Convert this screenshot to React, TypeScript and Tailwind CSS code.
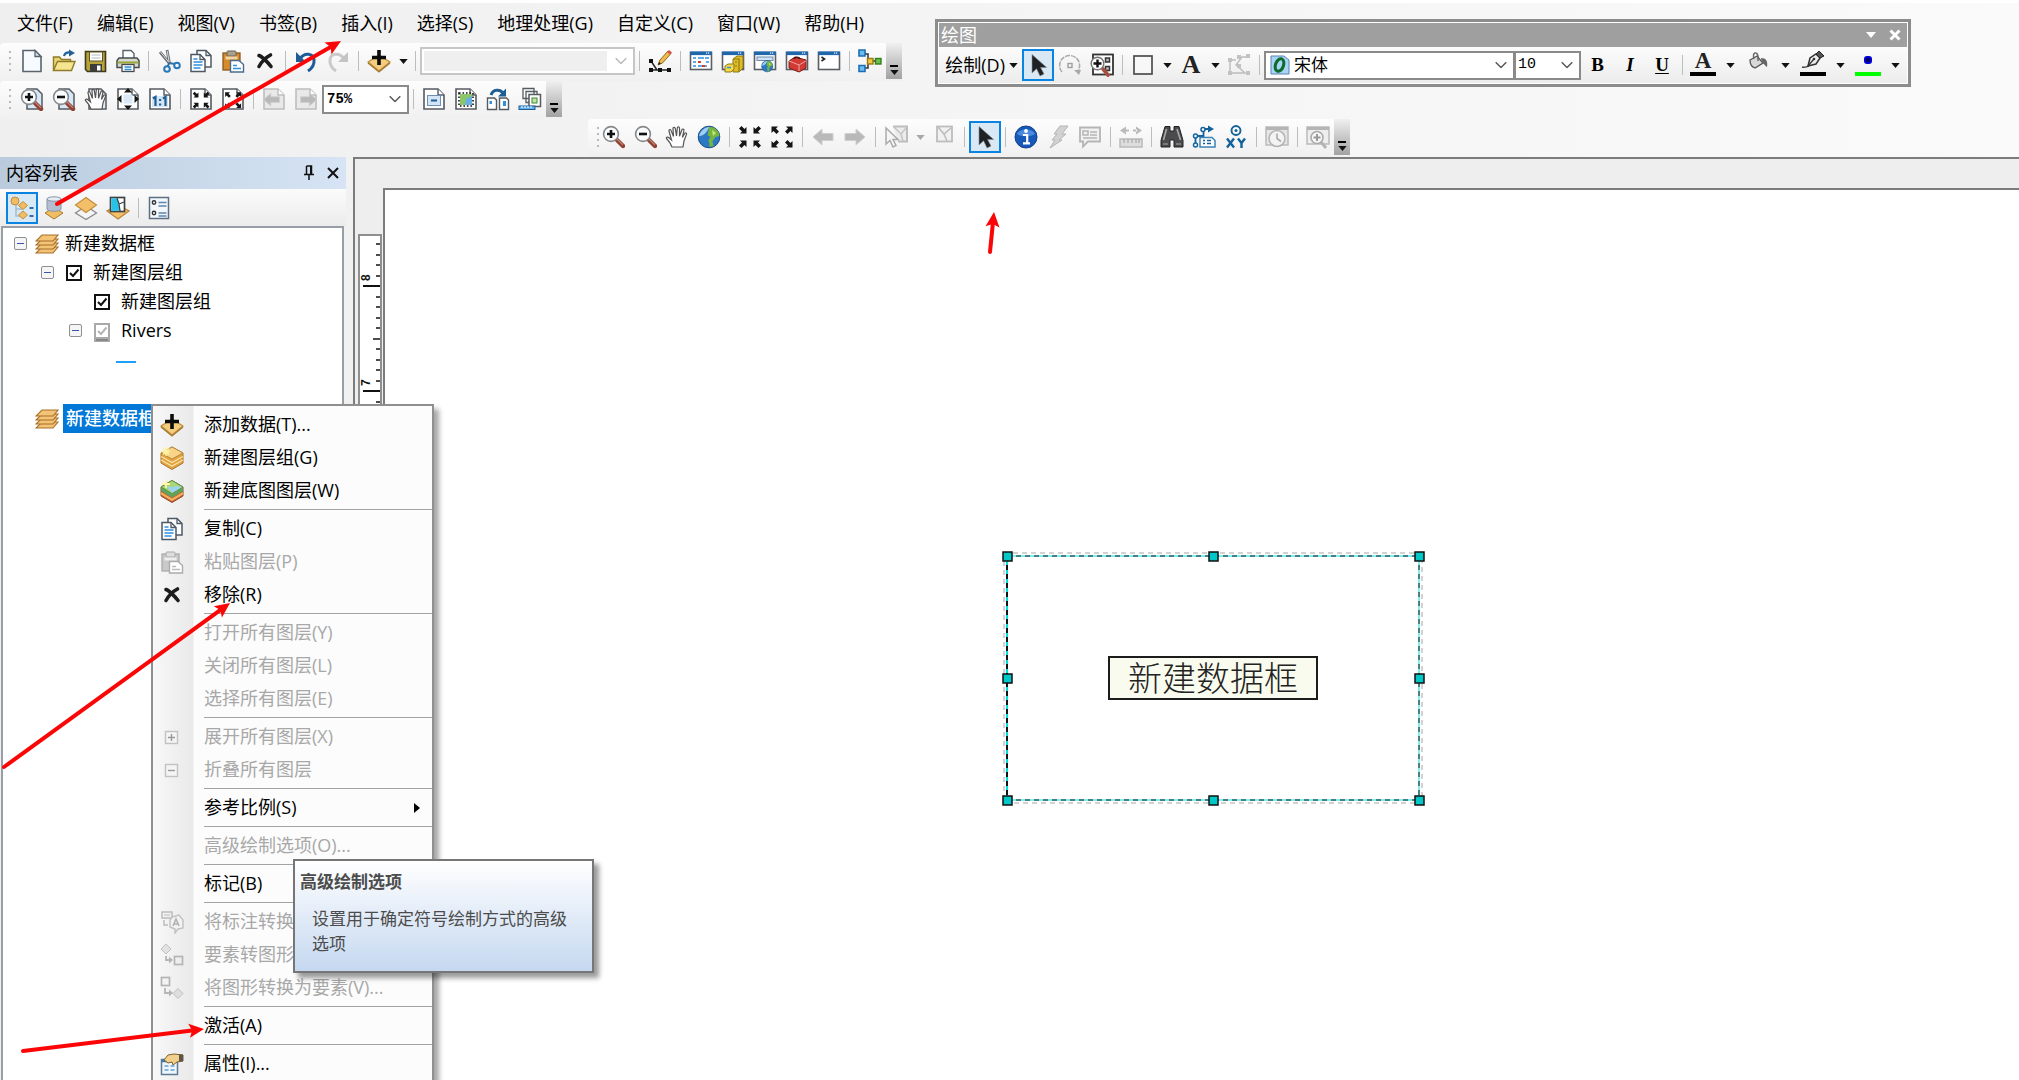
import React from "react";

type Kids = { children?: React.ReactNode };

const Svg = ({ children }: Kids) => (
  <svg viewBox="0 0 24 24" className="size-6 shrink-0" fill="none" aria-hidden="true">
    {children}
  </svg>
);

/* ---------- shared icon parts ---------- */
const Page = ({ dim = false, fold = true }: { dim?: boolean; fold?: boolean }) => (
  <>
    <path
      d={fold ? "M2 2h14l6 6v14H2z" : "M2 2h20v20H2z"}
      fill={dim ? "#e9e9e9" : "#fff"}
      stroke={dim ? "#bdbdbd" : "#555b61"}
      strokeWidth="1.6"
    />
    {fold && <path d="M16 2v6h6" stroke={dim ? "#bdbdbd" : "#555b61"} strokeWidth="1.4" fill="#fff" />}
  </>
);
const WindowBox = () => (
  <>
    <rect x="1.5" y="3.5" width="21" height="17" fill="#fff" stroke="#5b5f64" strokeWidth="1.6" />
    <rect x="1" y="2.5" width="22" height="3.6" fill="#1f66ad" />
    <path d="M17 4.2h4" stroke="#e8f1fa" strokeWidth="1.2" strokeDasharray="1.2 .8" />
  </>
);
const Arrows4 = ({ out = false, tight = false }: { out?: boolean; tight?: boolean }) => {
  const one = out
    ? "M1.5 1.5h6.500L6 3.500l3 3L6.500 9l-3-3-2 2z"
    : "M8.500 8.500H2l2-2-3-3L3.500 1l3 3 2-2z";
  return (
    <g fill="#151515" transform={tight ? "translate(3 4) scale(.76)" : undefined}>
      <path d={one} />
      <path d={one} transform="translate(24 0) scale(-1 1)" />
      <path d={one} transform="translate(0 24) scale(1 -1)" />
      <path d={one} transform="translate(24 24) scale(-1 -1)" />
    </g>
  );
};
const Lens = ({ plus, x = 0, y = 0 }: { plus: boolean; x?: number; y?: number }) => (
  <g transform={`translate(${x} ${y})`}>
    <path d="M15 15l6 6" stroke="#8e4132" strokeWidth="4.4" strokeLinecap="round" />
    <path d="M15 14l5.500 5.500" stroke="#c58272" strokeWidth="1.2" strokeLinecap="round" />
    <circle cx="9" cy="9" r="7.4" fill="#fafcfd" stroke="#85898d" strokeWidth="1.6" />
    <path d={plus ? "M9 5v8M5 9h8" : "M5 9h8"} stroke="#111" strokeWidth="2.6" />
  </g>
);
const HandPath = () => (
  <path
    d="M7 22c-1-3-3-6-5.5-8.500C.8 12.500 2.500 11.500 4 12.800L6.500 15 4 6c-.3-1.600 1.500-2 2-.6l2.500 6L8 3.600c0-1.700 2-1.700 2.300 0l1.200 7.400.8-8c.2-1.500 2.100-1.400 2.200 0v8.200l2.400-6.400c.6-1.400 2.300-.8 2 .7l-1.500 7 2.300-4c.8-1.300 2.300-.4 1.800.9L19 16l-1 6z"
    fill="#fff"
    stroke="#555"
    strokeWidth="1.200"
  />
);
const Block = ({ dir }: { dir: "l" | "r" }) => (
  <path
    d="M2 12L11 4v4.500h11v7H11V20z"
    fill="#b9b9b9"
    stroke="#cfcfcf"
    transform={dir === "r" ? "translate(24 0) scale(-1 1)" : undefined}
  />
);
const Cross = () => (
  <path d="M6 6.500c3 1 9 7 12 11M17.500 6c-4 2-9 7-11.500 11.500" stroke="#1c1c1c" strokeWidth="3.600" strokeLinecap="round" />
);
const CopyIc = () => (
  <>
    <path d="M8 1.500h9l5 5V18H8z" fill="#fff" stroke="#4d5a66" strokeWidth="1.500" />
    <path d="M17 1.500v5h5" stroke="#4d5a66" strokeWidth="1.300" />
    <path d="M2 5.500h9l5 5V22.500H2z" fill="#fff" stroke="#4d5a66" strokeWidth="1.500" />
    <path d="M11 5.500v5h5" stroke="#4d5a66" strokeWidth="1.300" />
    <path d="M4.500 10h4M4.500 13h9M4.500 16h9M4.500 19h7" stroke="#2f8fe0" strokeWidth="1.500" />
  </>
);
const PasteIc = ({ dim = false }: { dim?: boolean }) => (
  <>
    <rect x="2" y="4" width="17" height="17" fill={dim ? "#c9c9c9" : "#d58a2c"} stroke={dim ? "#ababab" : "#8a5a1e"} strokeWidth="1.300" />
    <rect x="6" y="2" width="9" height="5" rx="1" fill={dim ? "#ddd" : "#a9a08e"} stroke={dim ? "#aaa" : "#6b6353"} />
    <rect x="4.500" y="7.500" width="12" height="3" fill={dim ? "#eee" : "#f2d5a6"} />
    <path d="M9.500 11.500h8.500l4.500 4V23h-13z" fill="#fff" stroke={dim ? "#ababab" : "#4d6b88"} strokeWidth="1.400" />
    <path d="M12 16.500h4M12 19.500h8" stroke={dim ? "#bbb" : "#2f8fe0"} strokeWidth="1.500" />
  </>
);
const AddData = () => (
  <>
    <path d="M12 6L23 13 12 22 1 13z" fill="#f4cd7e" stroke="#b98a3c" strokeWidth="1.200" />
    <path d="M1 14l11 9 11-9" stroke="#a87a30" strokeWidth="1.300" />
    <path d="M12 1v15M5 8.500h14" stroke="#0c0c0c" strokeWidth="3.600" />
  </>
);
const Cursor = () => (
  <path d="M6 1.500V20l4.600-4.200L14 23l4-2-3.400-6.600h6z" fill="#1f2225" stroke="#8a8a8a" strokeWidth=".6" />
);
const Globe = ({ s = 1, x = 0, y = 0 }: { s?: number; x?: number; y?: number }) => (
  <g transform={`translate(${x} ${y}) scale(${s})`}>
    <circle cx="12" cy="12" r="10.800" fill="#2b79c4" stroke="#1f4f88" />
    <path d="M2 11c1-5 6-9 10-9-1 4-5 9-10 9z" fill="#9fd0f2" />
    <path d="M12 2c6-.5 10 4 10.500 9l-4 1-3 4 1 5c-3 1.500-5 .5-4-2l-1-4 2-3-3-2 1-4z" fill="#76b63c" />
    <path d="M15 5l4 3-3 3z" fill="#c8e47a" />
  </g>
);
const Diamond = ({ x, y, s = 1, fill = "#f0bd62" }: { x: number; y: number; s?: number; fill?: string }) => (
  <path transform={`translate(${x} ${y}) scale(${s})`} d="M0-5L9 1 0 7-9 1z" fill={fill} stroke="#a9792d" />
);
const Layers = () => (
  <>
    {[20, 16, 12, 8].map((y) => (
      <path key={y} d={`M7 ${y - 5}h16l-5 6H1z`} fill="#f3c376" stroke="#a8702a" strokeWidth="1.100" />
    ))}
  </>
);
const Bin = () => (
  <>
    <path d="M5 1.500h5V6h4V1.500h5l4 14V22h-9v-7h-4v7H1v-6.500z" fill="#4b4b4d" stroke="#222" />
    <path d="M6.500 4L3.500 15M17 4l3.500 11" stroke="#a9a9a9" strokeWidth="1.600" />
    <path d="M3 19h5M16 19h5" stroke="#8b8b8b" strokeWidth="1.500" />
  </>
);

const icons: Record<string, React.ReactNode> = {
  layers: <Layers />,
  new: (
    <>
      <path d="M3 1.500h12l6 6v15H3z" fill="#f7fbff" stroke="#59646e" strokeWidth="1.600" />
      <path d="M15 1.500v6h6z" fill="#dbe7f1" stroke="#59646e" strokeWidth="1.300" />
    </>
  ),
  open: (
    <>
      <path d="M1.500 21.500V8h6l2 2.500h9V13" fill="#e9d372" stroke="#8f7a28" strokeWidth="1.400" />
      <path d="M1.500 21.500L5.500 12.500h17.500l-3.500 9z" fill="#f5e58f" stroke="#8f7a28" strokeWidth="1.400" />
      <path d="M12 7c1-3.500 4-4 7-3.500" stroke="#23619a" strokeWidth="2.200" />
      <path d="M17 .5l6 3.500-6 3.500z" fill="#23619a" />
    </>
  ),
  save: (
    <>
      <path d="M1.500 2.500h20v20h-18l-2-2z" fill="#b8a23a" stroke="#3d3a1d" strokeWidth="1.600" />
      <rect x="5.500" y="3" width="13" height="9" fill="#fff" stroke="#5b5420" />
      <path d="M7.500 6h9M7.500 9h9" stroke="#b9b9b9" />
      <rect x="6" y="15" width="12" height="7.500" fill="#3c3c3c" />
      <rect x="13" y="16.500" width="3.500" height="5" fill="#fff" />
    </>
  ),
  print: (
    <>
      <path d="M7 1.500h8l3 3V11H7z" fill="#fff" stroke="#59646e" strokeWidth="1.400" />
      <path d="M3 9h18l2 2.500v7H1v-7z" fill="#d5d8d3" stroke="#474b4e" strokeWidth="1.500" />
      <path d="M1.500 13.500h21" stroke="#99a835" strokeWidth="2" />
      <rect x="6" y="15.500" width="12" height="7" fill="#fff" stroke="#474b4e" strokeWidth="1.300" />
      <path d="M8.500 18h7M8.500 20.500h7" stroke="#2f8fe0" strokeWidth="1.300" />
    </>
  ),
  cut: (
    <>
      <path d="M3 3l10 12M10 1l2.500 13" stroke="#6b7075" strokeWidth="2.800" />
      <path d="M3.500 3l9 11M10.200 2l2 11" stroke="#e4e6e8" strokeWidth=".9" />
      <path d="M12 14l6 1M12.500 13l-2 5" stroke="#3a6f9c" strokeWidth="2" />
      <circle cx="10" cy="20" r="2.800" stroke="#2778b8" strokeWidth="2" />
      <circle cx="20" cy="16.500" r="2.800" stroke="#2778b8" strokeWidth="2" />
    </>
  ),
  copy: <CopyIc />,
  paste: <PasteIc />,
  pasteDim: <PasteIc dim />,
  cross: <Cross />,
  undo: (
    <>
      <path d="M6 10c4-7 14-6 14 1 .5 5-3 9-6 11" stroke="#1f5d96" strokeWidth="3" />
      <path d="M2 3v10h10z" fill="#1f5d96" />
    </>
  ),
  redo: (
    <>
      <path d="M18 10C14 3 4 4 4 11c-.5 5 3 9 6 11" stroke="#cacaca" strokeWidth="3" />
      <path d="M22 3v10H12z" fill="#c4c4c4" />
    </>
  ),
  add: <AddData />,
  editor: (
    <>
      <path d="M3 12l6 9M3 21h18" stroke="#222" strokeWidth="1.400" />
      <path d="M1 10h4v4H1zM1 19h4v4H1zM10 19h4v4h-4zM19 19h4v4h-4z" fill="#111" />
      <path d="M10 16l2-5 8-9 3 2.500-8.500 9.500z" fill="#f1bb4c" stroke="#8d6a24" />
      <path d="M19 3l2-2 3 2.500-2 2z" fill="#d9534a" />
      <path d="M10 16l1-3 2 1.500z" fill="#222" />
    </>
  ),
  toc: (
    <>
      <WindowBox />
      <path d="M4 9h3M4 13h3M4 17h3M16 9h4M17 13h3" stroke="#2f8fe0" strokeWidth="1.600" />
      <path d="M9 9h6M9 17h9" stroke="#2f8fe0" strokeWidth="1.600" />
      <path d="M9 13h3M13 17h3" stroke="#d83b32" strokeWidth="1.800" />
    </>
  ),
  catalog: (
    <>
      <WindowBox />
      <path d="M12 10l4-3h6v12l-4 4h-6z" fill="#e0bd25" stroke="#8c7717" />
      <path d="M12 10h6v13M14 13h2M14 17h2" stroke="#8c7717" strokeWidth="1.200" />
      <path d="M4 17l3-2h6v5l-3 3H4z" fill="#f4da4a" stroke="#8c7717" />
      <path d="M6 18.500h4" stroke="#2f8fe0" strokeWidth="1.500" />
    </>
  ),
  search: (
    <>
      <WindowBox />
      <rect x="4" y="8" width="16" height="3.500" fill="#cfe1f2" stroke="#6b8cab" />
      <Globe s={0.52} x={8} y={11} />
    </>
  ),
  toolbox: (
    <>
      <WindowBox />
      <path d="M4 12l6-4 11 3v8l-7 4-10-4z" fill="#d23b34" stroke="#7d1814" />
      <path d="M4 12l10 4 7-4M14 16v6" stroke="#f3a39e" />
      <path d="M9 10c1-2.500 5-2 6 0" stroke="#4a0f0c" strokeWidth="1.600" />
    </>
  ),
  python: (
    <>
      <WindowBox />
      <path d="M4.500 8l3 2-3 2" stroke="#222" strokeWidth="1.600" />
    </>
  ),
  model: (
    <>
      <path d="M7 5h3v7h4M7 19h3v-7M14 12h5" stroke="#333" strokeWidth="1.500" />
      <path d="M1 1h6v6H1z" fill="#6bbcf5" stroke="#1e6fb0" strokeWidth="1.600" />
      <path d="M1 16.500h6v6H1z" fill="#6bbcf5" stroke="#1e6fb0" strokeWidth="1.600" />
      <rect x="9.500" y="9.500" width="5.500" height="5.500" fill="#f2c840" stroke="#9a7a12" strokeWidth="1.400" />
      <rect x="17.500" y="9.500" width="5.500" height="5.500" fill="#6cc04a" stroke="#2f7f1e" strokeWidth="1.400" />
    </>
  ),
  pgZoomIn: (
    <>
      <path d="M7 2h10l5 5v15H7z" fill="#d8e8f6" stroke="#555b61" strokeWidth="1.500" />
      <Lens plus x={0} y={1} />
    </>
  ),
  pgZoomOut: (
    <>
      <path d="M7 2h10l5 5v15H7z" fill="#d8e8f6" stroke="#555b61" strokeWidth="1.500" />
      <Lens plus={false} x={0} y={1} />
    </>
  ),
  pgHand: (
    <>
      <path d="M5 2h12l5 5v15H5z" fill="#e9eef2" stroke="#555b61" strokeWidth="1.500" />
      <HandPath />
    </>
  ),
  pgFull: (
    <>
      <Page />
      <rect x="7.500" y="7.500" width="9" height="9" fill="#d8e8f6" />
      <path d="M12 1l4 4.500H8zM12 23l4-4.500H8zM1 12l4.500-4v8zM23 12l-4.500-4v8z" fill="#151515" />
    </>
  ),
  pgOne: (
    <>
      <Page />
      <rect x="4" y="9" width="16" height="11" fill="#d4e6f6" />
      <path d="M5 11.500l2.500-1.500v9M15 11.500l2.500-1.500v9" stroke="#1d5e94" strokeWidth="2.200" />
      <path d="M11 12h2.200v2H11zM11 16.500h2.200v2H11z" fill="#1d5e94" />
    </>
  ),
  pgIn: (
    <>
      <Page />
      <Arrows4 tight />
    </>
  ),
  pgOut: (
    <>
      <Page />
      <Arrows4 out tight />
    </>
  ),
  pgBack: (
    <>
      <Page dim />
      <g transform="translate(0 3) scale(.8)"><Block dir="l" /></g>
    </>
  ),
  pgFwd: (
    <>
      <Page dim />
      <g transform="translate(5 3) scale(.8)"><Block dir="r" /></g>
    </>
  ),
  draft: (
    <>
      <Page />
      <rect x="5.500" y="8.500" width="13" height="10" fill="#d4e6f6" stroke="#6a92b8" />
      <path d="M9 13.500h6" stroke="#1d5e94" strokeWidth="2" />
    </>
  ),
  focus: (
    <>
      <Page />
      <path d="M6 7h12v11H6z" fill="#8cc66b" />
      <path d="M12 12l6-3v9h-7z" fill="#66b0e4" />
      <rect x="5" y="6" width="14" height="13" stroke="#111" strokeWidth="1.600" strokeDasharray="1.600 1.900" />
    </>
  ),
  change: (
    <>
      <path d="M1.500 11h7l2 2v9.500h-9zM13.500 11h7l2 2v9.500h-9z" fill="#fff" stroke="#555b61" strokeWidth="1.400" />
      <path d="M3.500 14h2.500v3H3.500zM17 14h3v5h-3z" fill="#2f8fe0" />
      <path d="M5 8c2-6 9-6 12-2" stroke="#1d5e94" strokeWidth="3" />
      <path d="M20 1.500v8h-8z" fill="#1d5e94" />
    </>
  ),
  dataDriven: (
    <>
      <path d="M5 1.500h11v10H5zM8 4.500h11v11H8z" fill="#fff" stroke="#555b61" strokeWidth="1.300" />
      <rect x="11" y="7.500" width="11.500" height="12" fill="#fff" stroke="#555b61" strokeWidth="1.500" />
      <rect x="14" y="11" width="5" height="5" fill="#bfe3a8" stroke="#3f8a2d" />
      <rect x="1" y="19" width="16" height="3.500" fill="#63b0ee" stroke="#1d5e94" />
      <path d="M4 19v2M7 19v2M10 19v2M13 19v2" stroke="#fff" />
    </>
  ),
  zoomIn: <Lens plus x={1} y={0} />,
  zoomOut: <Lens plus={false} x={1} y={0} />,
  hand: <HandPath />,
  globe: <Globe />,
  fixIn: <Arrows4 />,
  fixOut: <Arrows4 out />,
  back: <Block dir="l" />,
  fwd: <Block dir="r" />,
  selectDim: (
    <>
      <path d="M9 1.500h14v15h-9" stroke="#bdbdbd" strokeWidth="2" fill="#ececec" />
      <path d="M10 2l7 7 5-6M17 9l2 7" stroke="#c4c4c4" strokeWidth="1.500" />
      <path d="M2 3v16l4-3.500 3 6.500 3-1.500L9 14.500h5z" fill="#f6f6f6" stroke="#ababab" strokeWidth="1.500" />
    </>
  ),
  clearDim: (
    <>
      <rect x="5" y="1.500" width="15" height="15" fill="#f1f1f1" stroke="#bdbdbd" strokeWidth="1.800" />
      <path d="M6 2l6 7 7-6M12 9l3 7" stroke="#bdbdbd" strokeWidth="1.600" />
    </>
  ),
  cursor: <Cursor />,
  info: (
    <>
      <circle cx="12" cy="12" r="11" fill="#1659b8" stroke="#0f418c" />
      <path d="M3 9c2-6 16-6 18 0-4 3-14 3-18 0z" fill="#4a8be0" />
      <circle cx="12" cy="6" r="1.900" fill="#fff" />
      <path d="M9 10h4.200v8M9 18.300h7" stroke="#fff" strokeWidth="2.200" />
    </>
  ),
  bolt: <path d="M14 1h8l-6 8h4l-7 6h3L4 23l5-8H6l5-6H8z" fill="#d2d2d2" stroke="#b5b5b5" />,
  popup: (
    <>
      <path d="M2 2.500h20v14H10l-5 5v-5H2z" fill="#f1f1f1" stroke="#b5b5b5" strokeWidth="1.800" />
      <path d="M5 6h5v4H5zM12 7h7M12 10h7M5 13h14" stroke="#b5b5b5" strokeWidth="1.500" />
    </>
  ),
  measure: (
    <>
      <path d="M1 5.500l6-4v8zM23 5.500l-6-4v8zM6 4.500h4v2H6zM14 4.500h4v2h-4z" fill="#bababa" />
      <rect x="1" y="14" width="22" height="8" fill="#ddd" stroke="#bababa" strokeWidth="1.500" />
      <path d="M5 14v4M9 14v4M13 14v4M17 14v4M20 14v4" stroke="#a9a9a9" strokeWidth="1.200" />
    </>
  ),
  find: <Bin />,
  route: (
    <>
      <path d="M3.500 19v-8h8V4h6" stroke="#12629b" strokeWidth="1.800" />
      <path d="M16 .5l6 3.500-6 3.500z" fill="#12629b" />
      <circle cx="3.500" cy="20" r="2" fill="#fff" stroke="#12629b" strokeWidth="1.500" />
      <circle cx="3.500" cy="11" r="2" fill="#fff" stroke="#12629b" strokeWidth="1.500" />
      <circle cx="11" cy="4.500" r="2" fill="#fff" stroke="#12629b" strokeWidth="1.500" />
      <path d="M8 12.500h12l3 3V22H8z" fill="#fff" stroke="#3c83b5" strokeWidth="1.500" />
      <path d="M11 15.500h2M15 15.500h4M11 18.500h2M15 18.500h4" stroke="#12629b" strokeWidth="1.300" />
    </>
  ),
  xy: (
    <>
      <circle cx="12" cy="5.500" r="4.500" stroke="#12629b" strokeWidth="1.900" />
      <circle cx="12" cy="5.500" r="1.500" fill="#12629b" />
      <path d="M3 13.500l7 9M10 13.500l-7 9M14 13.500l3.500 4.500 3.500-4.500M17.500 18v5" stroke="#12629b" strokeWidth="2.400" />
    </>
  ),
  time: (
    <>
      <path d="M1 2h22v18H1z" fill="#e6e6e6" stroke="#bbb" strokeWidth="1.500" />
      <path d="M1 3.500h22" stroke="#b5b5b5" strokeWidth="3" />
      <circle cx="12" cy="13.500" r="8" fill="#f3f3f3" stroke="#b5b5b5" strokeWidth="1.600" />
      <path d="M12 8.500v5l4 3" stroke="#aaa" strokeWidth="1.600" />
    </>
  ),
  viewer: (
    <>
      <path d="M1 2h22v17H1z" fill="#eee" stroke="#bbb" strokeWidth="1.500" />
      <path d="M1 3.500h22" stroke="#b5b5b5" strokeWidth="3" />
      <path d="M15 17l5 6" stroke="#b5b5b5" strokeWidth="3" />
      <circle cx="11" cy="12.500" r="6" fill="#f6f6f6" stroke="#aaa" strokeWidth="1.600" />
      <path d="M11 9v7M7.500 12.500h7" stroke="#999" strokeWidth="2" />
    </>
  ),
  rotate: (
    <>
      <path d="M4 19a10 10 0 1 1 16-1" stroke="#a9a9a9" strokeWidth="1.500" strokeDasharray="5 1" />
      <path d="M16 17h7l-2 5z" fill="#a9a9a9" />
      <rect x="10" y="10.500" width="4" height="4" stroke="#a0a0a0" strokeWidth="1.400" />
    </>
  ),
  zoomSel: (
    <>
      <rect x="3" y="1.500" width="20" height="20" fill="#fff" stroke="#333" strokeWidth="1.800" />
      <rect x="15.500" y="5" width="4" height="4" fill="#bbb" stroke="#333" strokeWidth="1.500" />
      <rect x="15.500" y="13.500" width="4" height="4" fill="#bbb" stroke="#333" strokeWidth="1.500" />
      <path d="M13 16l5 6" stroke="#a8503f" strokeWidth="3.600" strokeLinecap="round" />
      <circle cx="7.500" cy="10.500" r="6.300" fill="#fff" stroke="#777" strokeWidth="1.500" />
      <path d="M7.500 6.500v8M3.500 10.500h8" stroke="#111" strokeWidth="2.400" />
    </>
  ),
  rect: <rect x="3" y="3" width="18" height="18" fill="#f7f7f7" stroke="#4d4d4d" strokeWidth="1.700" />,
  vertices: (
    <>
      <path d="M3 20V7h6M20 4h-5l-6 8 9 8H3" stroke="#bcbcbc" strokeWidth="1.400" />
      <path d="M1 5h4v4H1zM1 18h4v4H1zM10 2h4v4h-4zM19 1h4v4h-4zM10 11h4v4h-4zM19 18h4v4h-4z" fill="#c2c2c2" />
    </>
  ),
  listOrder: (
    <>
      <path d="M6 7v13h6M6 13h6" stroke="#a7bccf" strokeWidth="1.500" />
      <circle cx="5" cy="5" r="4" fill="#f0bd62" stroke="#c08f3e" />
      <path d="M13 5.500l4.500 4-4.500 4-4.500-4zM13 15l4.500 4-4.500 4-4.500-4z" fill="#f0bd62" stroke="#c08f3e" />
      <path d="M19.500 12h4M19.500 20h4" stroke="#2a6ea3" strokeWidth="2" />
    </>
  ),
  listSource: (
    <>
      <Diamond x={12} y={16} />
      <path d="M5 3v10c0 3 14 3 14 0V3z" fill="#b3bfd0" stroke="#8794a8" />
      <ellipse cx="12" cy="3" rx="7" ry="2.200" fill="#e6ecf4" stroke="#8794a8" />
    </>
  ),
  listVis: (
    <>
      <path d="M12 10l10.500 7L12 23.500 1.500 17z" fill="#f4f4f4" stroke="#8b8b8b" strokeWidth="1.300" />
      <path d="M12 1.500L22.500 9 12 16.500 1.500 9z" fill="#f3c069" stroke="#c08f3e" strokeWidth="1.200" />
    </>
  ),
  listSel: (
    <>
      <path d="M12 9l11 6-11 8L1 15z" fill="#f3c069" stroke="#b5853a" strokeWidth="1.200" />
      <rect x="4.500" y="1.500" width="14" height="14" fill="#fff" stroke="#3f4346" strokeWidth="1.700" />
      <path d="M5.300 2.300h6l3 12.500h-9z" fill="#27c2e6" />
      <path d="M11 2l2 6 5-2M13 8l1 7" stroke="#3f4346" strokeWidth="1.300" />
    </>
  ),
  options: (
    <>
      <rect x="2.500" y="1.500" width="19" height="21" fill="#f3f7fb" stroke="#5d6f82" strokeWidth="1.500" />
      <circle cx="7" cy="6.500" r="1.700" stroke="#333" strokeWidth="1.400" />
      <circle cx="7" cy="17" r="1.700" stroke="#333" strokeWidth="1.400" />
      <path d="M11.500 6.500h8M11.500 10h8M11.500 17h8M11.500 20h8" stroke="#5d87ae" strokeWidth="1.300" />
    </>
  ),
  group: (
    <>
      <path d="M1 7l11-6 11 6v10l-11 6.500L1 17z" fill="#e3a43f" stroke="#a8762a" />
      <path d="M1 7l11-6 11 6-11 6z" fill="#f8d388" stroke="#b98a3c" />
      <path d="M1 10.500l11 6 11-6M1 14l11 6 11-6" stroke="#fbe3ae" strokeWidth="1.100" />
      <path d="M6 1v9M1.500 5.500h9M3 2.500l6 6M9 2.500l-6 6" stroke="#fff3a0" strokeWidth="1.300" />
    </>
  ),
  basemap: (
    <>
      <path d="M1 8l11-6.500L23 8v9l-11 6.500L1 17z" fill="#c86038" stroke="#8f4a26" />
      <path d="M1 13l11 6.500L23 13v2.500L12 22 1 15.500z" fill="#f2b25c" />
      <path d="M1 8l11-6.500L23 8v4l-11 6.500L1 12z" fill="#5fa45a" />
      <path d="M1 8l11-6.500L23 8l-11 6.500z" fill="#a9d777" stroke="#5c9446" />
      <path d="M7 8c3-2 6 2 9-1l6 1-10 6z" fill="#9bd3ee" />
      <path d="M6 1v8M2 5h8" stroke="#fff6a8" strokeWidth="1.800" />
    </>
  ),
  labelAnno: (
    <>
      <path d="M2 2h10v6H2zM4 10v5h4" stroke="#bcbcbc" strokeWidth="1.500" />
      <path d="M4 5h6" stroke="#bcbcbc" />
      <path d="M12 7l7-2 4 5v8l-5 1-3 4v-4l-5-2v-7z" fill="#f2f2f2" stroke="#c0c0c0" strokeWidth="1.400" />
      <path d="M13 16l3-7 3 7M14 14h4" stroke="#b0b0b0" strokeWidth="1.500" />
    </>
  ),
  featGraph: (
    <>
      <path d="M6 1l5 5-5 5-5-5z" fill="#e2e2e2" stroke="#c0c0c0" />
      <path d="M6 13v4h5" stroke="#b5b5b5" strokeWidth="1.800" />
      <path d="M9 13.500l4 3.500-4 3.500z" fill="#b5b5b5" />
      <rect x="14.500" y="13.500" width="8" height="8" stroke="#b5b5b5" strokeWidth="1.700" />
    </>
  ),
  graphFeat: (
    <>
      <rect x="1.500" y="1.500" width="8" height="8" stroke="#b5b5b5" strokeWidth="1.700" />
      <path d="M5 12v5h5" stroke="#b5b5b5" strokeWidth="1.800" />
      <path d="M9 13.500l4 3.500-4 3.500z" fill="#b5b5b5" />
      <path d="M18 12.500l5 5-5 5-5-5z" fill="#dedede" stroke="#c0c0c0" />
    </>
  ),
  props: (
    <>
      <path d="M1.500 7.500h16v15h-16z" fill="#eef5fb" stroke="#5d7b97" strokeWidth="1.500" />
      <path d="M1.500 9h16" stroke="#3c78ad" strokeWidth="2.500" />
      <path d="M4.500 14h4M10.500 14h4M4.500 18h4M10.500 18h4" stroke="#86b7e0" strokeWidth="2" />
      <path d="M4 8l4-5 6-1 9 1v6l-6 1-4 3-1-3-4 1z" fill="#f3cf8c" stroke="#7d5f2c" />
      <path d="M19 2.500h4v7h-4z" fill="#5c5648" />
    </>
  ),
  plusBox: (
    <>
      <rect x="5.500" y="6.500" width="12" height="12" fill="#f4f4f4" stroke="#c2c2c2" strokeWidth="1.400" />
      <path d="M11.500 9v7M8 12.500h7" stroke="#999" strokeWidth="1.400" />
    </>
  ),
  minusBox: (
    <>
      <rect x="5.500" y="6.500" width="12" height="12" fill="#f4f4f4" stroke="#c2c2c2" strokeWidth="1.400" />
      <path d="M8 12.500h7" stroke="#999" strokeWidth="1.400" />
    </>
  ),
  bucket: (
    <>
      <path d="M4 11l7-4 6 7-8 5c-3-1-5-4-5-8z" fill="#d8d8d8" stroke="#555" strokeWidth="1.300" />
      <path d="M8 10c-2-7 3-8 4-3v5" stroke="#666" strokeWidth="1.400" />
      <path d="M15 9c5 0 7 3 6 9-2-1-3-4-5-4z" fill="#666" />
    </>
  ),
  pen: (
    <>
      <path d="M1 18c4 1 5-1 7-1" stroke="#444" strokeWidth="1.300" />
      <path d="M7 17l2-8 6-4 4 4-4 6z" fill="#ececec" stroke="#333" strokeWidth="1.500" />
      <path d="M7 17l6-7" stroke="#333" strokeWidth="1.200" />
      <circle cx="13" cy="10" r="1.300" fill="#333" />
      <path d="M15 5l3-3 5 5-4 2z" fill="#555" stroke="#222" />
    </>
  ),
  dot: (
    <>
      <rect x="8" y="7" width="8" height="8" rx="3" fill="#0000d8" />
      <rect x="10" y="9" width="4" height="4" fill="#000060" />
    </>
  ),
};

const Ic = ({ n }: { n: string }) => <Svg>{icons[n]}</Svg>;

const Tool = ({ n, label, on = false }: { n: string; label: string; on?: boolean }) => (
  <button
    type="button"
    aria-label={label}
    aria-pressed={on}
    className={
      on
        ? "flex size-8 shrink-0 items-center justify-center border-2 border-[#0a84e3] bg-[#d9e8f5]"
        : "flex size-8 shrink-0 items-center justify-center"
    }
  >
    <Ic n={n} />
  </button>
);
const Sep = () => (
  <span className="flex w-[9px] shrink-0 justify-center">
    <span className="h-5 w-px bg-[#bdbdbd]" />
  </span>
);
const Grip = () => (
  <span className="flex w-4 shrink-0 flex-col items-center gap-1 pl-1">
    {[0, 1, 2, 3].map((i) => (
      <span key={i} className="size-[2px] bg-[#b9b9b9]" />
    ))}
  </span>
);
const Triangle = ({ light = false }: { light?: boolean }) => (
  <svg viewBox="0 0 10 6" className="h-[5px] w-[9px]" aria-hidden="true">
    <path d="M0 0h10L5 6z" fill={light ? "#a9a9a9" : "#111"} />
  </svg>
);
const Caret = ({ label, light, wide }: { label: string; light?: boolean; wide?: boolean }) => (
  <button
    type="button"
    aria-label={label}
    className={wide ? "flex h-8 w-[23px] shrink-0 items-center justify-center" : "flex h-8 w-4 shrink-0 items-center justify-center"}
  >
    <Triangle light={light} />
  </button>
);
const Overflow = () => (
  <button
    type="button"
    aria-label="工具栏选项"
    className="flex w-4 shrink-0 flex-col items-center justify-end gap-[3px] self-stretch bg-linear-to-b from-[#f0f0f0] to-[#a2a2a2] pb-1"
  >
    <span className="h-[2px] w-2 bg-black" />
    <Triangle />
  </button>
);
const Chevron = ({ dim = false }: { dim?: boolean }) => (
  <svg viewBox="0 0 12 7" className="pointer-events-none absolute top-1/2 right-1.5 h-[7px] w-3 -translate-y-1/2" fill="none" aria-hidden="true">
    <path d="M.7.7L6 6 11.300.7" stroke={dim ? "#b9b9b9" : "#555"} strokeWidth="1.400" />
  </svg>
);
const Bar = ({ children }: Kids) => (
  <div className="flex h-[38px] w-fit items-center rounded-l bg-linear-to-b from-[#fdfdfd] to-[#f0f0f0] pb-0.5">{children}</div>
);

const menus = ["文件(F)", "编辑(E)", "视图(V)", "书签(B)", "插入(I)", "选择(S)", "地理处理(G)", "自定义(C)", "窗口(W)", "帮助(H)"];

const DrawingToolbar = () => (
  <section aria-label="绘图" className="absolute top-[19px] right-[108px] left-[935px] border-[3px] border-[#8c8c8c] bg-white p-px">
    <header className="flex h-6 items-center bg-[#9f9f9f] pl-0.5 text-white">
      <h2 className="flex-1 text-[18px] leading-6">绘图</h2>
      <button type="button" aria-label="选项" className="flex h-6 w-6 items-center justify-center">
        <svg viewBox="0 0 10 6" className="h-[6px] w-[10px]"><path d="M0 0h10L5 6z" fill="#fff" /></svg>
      </button>
      <button type="button" aria-label="关闭" className="flex h-6 w-6 items-center justify-center">
        <svg viewBox="0 0 12 12" className="size-3"><path d="M1.500 1.500l9 9M10.500 1.500l-9 9" stroke="#fff" strokeWidth="3" /></svg>
      </button>
    </header>
    <div className="flex h-9 items-center bg-linear-to-b from-[#fcfcfc] to-[#ececec]">
      <button type="button" className="flex h-8 w-[83px] shrink-0 items-center justify-end gap-1 pr-1 text-[18px]">
        绘制(D)
        <Triangle />
      </button>
      <Tool n="cursor" label="选择元素" on />
      <Tool n="rotate" label="旋转" />
      <Tool n="zoomSel" label="缩放至所选元素" />
      <Sep />
      <Tool n="rect" label="矩形" />
      <Caret label="形状" />
      <button type="button" aria-label="文本" className="size-8 shrink-0 font-['Liberation_Serif',serif] text-[26px] leading-8 font-bold text-[#222]">A</button>
      <Caret label="文本工具" />
      <Tool n="vertices" label="编辑折点" />
      <Sep />
      <span className="relative flex h-[29px] min-w-0 flex-1 items-center border-2 border-[#8a8a8a] bg-white">
        <svg viewBox="0 0 20 20" className="ml-1 size-5 shrink-0" fill="none" aria-hidden="true">
          <path d="M1 1h13l5 4v14H1z" fill="#a9d5f5" stroke="#5c82b5" />
          <ellipse cx="9.500" cy="10" rx="4" ry="6.500" transform="rotate(20 9.500 10)" stroke="#0d6b2c" strokeWidth="3" />
        </svg>
        <select aria-label="字体" className="h-full min-w-0 flex-1 appearance-none bg-transparent pl-1 text-[17px] leading-6">
          <option>宋体</option>
        </select>
        <Chevron />
      </span>
      <span className="relative -ml-px flex h-[29px] w-[67px] shrink-0 items-center border-2 border-[#8a8a8a] bg-white">
        <select aria-label="字号" className="size-full appearance-none bg-transparent pl-0.5 font-['Liberation_Mono',monospace] text-[15px]">
          <option>10</option>
        </select>
        <Chevron />
      </span>
      <button type="button" aria-label="加粗" className="h-8 w-[33px] shrink-0 font-['Liberation_Serif',serif] text-[19px] font-bold">B</button>
      <button type="button" aria-label="倾斜" className="size-8 shrink-0 font-['Liberation_Serif',serif] text-[19px] font-bold italic">I</button>
      <button type="button" aria-label="下划线" className="size-8 shrink-0 font-['Liberation_Serif',serif] text-[19px] font-bold underline underline-offset-2">U</button>
      <Sep />
      <button type="button" aria-label="字体颜色" className="flex h-8 w-8 shrink-0 flex-col items-center">
        <span className="h-[23px] font-['Liberation_Serif',serif] text-[23px] leading-6 font-bold text-[#222]">A</span>
        <span className="h-1 w-[26px] bg-black" />
      </button>
      <Caret label="选择字体颜色" wide />
      <button type="button" aria-label="填充颜色" className="flex h-8 w-8 shrink-0 flex-col items-center">
        <Ic n="bucket" />
      </button>
      <Caret label="选择填充颜色" wide />
      <button type="button" aria-label="线颜色" className="flex h-8 w-8 shrink-0 flex-col items-center">
        <span className="h-[23px]"><Ic n="pen" /></span>
        <span className="h-1 w-[26px] bg-black" />
      </button>
      <Caret label="选择线颜色" wide />
      <button type="button" aria-label="标记颜色" className="flex h-8 w-8 shrink-0 flex-col items-center">
        <span className="h-[23px]"><Ic n="dot" /></span>
        <span className="h-1 w-[26px] bg-[#00ff00]" />
      </button>
      <Caret label="选择标记颜色" wide />
    </div>
  </section>
);

const Collapse = () => (
  <button type="button" aria-label="折叠" className="flex size-[13px] shrink-0 items-center justify-center rounded-xs border border-[#909090] bg-[#f5f5f5]">
    <span className="h-px w-[7px] bg-[#3a55b0]" />
  </button>
);
const Check = ({ label, scaled = false }: { label: string; scaled?: boolean }) => (
  <label className="flex items-center gap-[11px]">
    <span className="relative flex size-4 shrink-0">
      <input
        type="checkbox"
        defaultChecked
        className={scaled ? "size-4 appearance-none border-2 border-[#a9a9a9] bg-white" : "size-4 appearance-none border-2 border-[#111] bg-white"}
      />
      <svg viewBox="0 0 16 16" className="pointer-events-none absolute inset-0 size-4" fill="none" aria-hidden="true">
        <path d="M4 8l3 3 5.500-6.500" stroke={scaled ? "#b5b5b5" : "#111"} strokeWidth="2" />
      </svg>
      {scaled && <span className="absolute inset-x-0 top-4 h-[3px] border-x-2 border-b border-[#a9a9a9] bg-[#888]" />}
    </span>
    {label}
  </label>
);

const Contents = () => (
  <aside className="flex w-[346px] shrink-0 flex-col">
    <header className="flex h-8 shrink-0 items-center bg-linear-to-r from-[#b9cbdd] to-[#d6e4f5] pl-1.5">
      <h2 className="flex-1 text-[18px] leading-6">内容列表</h2>
      <button type="button" aria-label="自动隐藏" className="flex size-6 items-center justify-center">
        <svg viewBox="0 0 12 16" className="h-4 w-3" fill="none"><path d="M3.500 1h5v8M3.500 1v8M1 9.500h10M6 10v5" stroke="#111" strokeWidth="1.500" /><path d="M8 1v8" stroke="#111" strokeWidth="2" /></svg>
      </button>
      <button type="button" aria-label="关闭" className="flex size-6 items-center justify-center">
        <svg viewBox="0 0 12 12" className="size-3"><path d="M1 1l10 10M11 1L1 11" stroke="#111" strokeWidth="2" /></svg>
      </button>
      <span className="w-px" />
    </header>
    <div className="flex h-[37px] shrink-0 items-center bg-linear-to-b from-[#fbfbfb] to-[#ececec] pl-1.5">
      <Tool n="listOrder" label="按绘制顺序列出" on />
      <Tool n="listSource" label="按源列出" />
      <Tool n="listVis" label="按可见性列出" />
      <Tool n="listSel" label="按选择列出" />
      <Sep />
      <Tool n="options" label="选项" />
    </div>
    <div className="mr-[2px] ml-px flex-1 border-2 border-b-0 border-[#989ea6] bg-white pt-px text-[18px] leading-[29px]">
      <div className="flex h-[29px] items-center pl-[11px]">
        <Collapse />
        <span className="mr-1.5 ml-2 flex"><Ic n="layers" /></span>
        新建数据框
      </div>
      <div className="flex h-[29px] items-center gap-3 pl-[38px]">
        <Collapse />
        <Check label="新建图层组" />
      </div>
      <div className="flex h-[29px] items-center pl-[91px]">
        <Check label="新建图层组" />
      </div>
      <div className="flex h-[29px] items-center gap-3 pl-[66px]">
        <Collapse />
        <Check label="Rivers" scaled />
      </div>
      <div className="flex h-[59px] pt-4 pl-[113px]">
        <span className="h-0.5 w-5 bg-[#1ea0ff]" />
      </div>
      <div className="flex h-[29px] items-center pl-8">
        <span className="mr-1 flex"><Ic n="layers" /></span>
        <span className="bg-[#0078d7] pr-1 pl-[3px] font-medium text-white">新建数据框</span>
      </div>
    </div>
  </aside>
);

type Item = { t: string; i?: string; off?: boolean; sub?: boolean };
const groups: Item[][] = [
  [{ t: "添加数据(T)...", i: "add" }, { t: "新建图层组(G)", i: "group" }, { t: "新建底图图层(W)", i: "basemap" }],
  [{ t: "复制(C)", i: "copy" }, { t: "粘贴图层(P)", i: "pasteDim", off: true }, { t: "移除(R)", i: "cross" }],
  [{ t: "打开所有图层(Y)", off: true }, { t: "关闭所有图层(L)", off: true }, { t: "选择所有图层(E)", off: true }],
  [{ t: "展开所有图层(X)", i: "plusBox", off: true }, { t: "折叠所有图层", i: "minusBox", off: true }],
  [{ t: "参考比例(S)", sub: true }],
  [{ t: "高级绘制选项(O)...", off: true }],
  [{ t: "标记(B)" }],
  [
    { t: "将标注转换", i: "labelAnno", off: true },
    { t: "要素转图形", i: "featGraph", off: true },
    { t: "将图形转换为要素(V)...", i: "graphFeat", off: true },
  ],
  [{ t: "激活(A)" }],
  [{ t: "属性(I)...", i: "props" }],
];

const ContextMenu = () => (
  <div role="menu" className="absolute top-[404px] left-[151px] w-[283px] border-2 border-[#8f8f8f] bg-[#fcfcfc] bg-linear-to-r from-[#f8f8f8] from-0% via-[#e9e9e9] via-[40px] to-[#fcfcfc] to-[41px] pt-0.5 text-[18px] shadow-[5px_5px_5px_rgba(0,0,0,0.35)]">
    {groups.map((g, gi) => (
      <React.Fragment key={gi}>
        {gi > 0 && (
          <div role="separator" className="flex h-[5px] items-center pl-[51px]">
            <span className="h-px flex-1 bg-[#a3a3a3]" />
          </div>
        )}
        {g.map((it) => (
          <button
            key={it.t}
            type="button"
            role="menuitem"
            disabled={it.off}
            className={
              it.off
                ? "flex h-[33px] w-full items-center pl-[7px] text-left whitespace-nowrap text-[#a8a8a8]"
                : "flex h-[33px] w-full items-center pl-[7px] text-left whitespace-nowrap text-black"
            }
          >
            <span className="mr-5 flex size-6 shrink-0">{it.i && <Ic n={it.i} />}</span>
            <span className="flex-1">{it.t}</span>
            {it.sub && (
              <svg viewBox="0 0 6 10" className="mr-3 h-3 w-[6px]"><path d="M0 0l6 5-6 5z" fill="#000" /></svg>
            )}
          </button>
        ))}
      </React.Fragment>
    ))}
  </div>
);

/* Ruler ticks, ten to the unit; offsets run down from the first tick. */
const Ruler = () => (
  <svg viewBox="0 0 24 900" className="mt-[46px] ml-[3px] h-[900px] w-6 shrink-0" fill="none">
    <rect x="1" y="1" width="22" height="898" fill="#fff" stroke="#8f8f8f" strokeWidth="2" />
    {Array.from({ length: 60 }, (_, i) => {
      const y = Math.round(10 + i * 10.5);
      const k = (i + 6) % 10;
      const len = k === 0 ? 17 : k === 5 ? 7 : 4;
      return <path key={i} d={`M${22 - len} ${y}H22`} stroke="#111" strokeWidth={k === 0 ? 2 : 1.5} />;
    })}
    <text transform="translate(12 47) rotate(-90)" fontSize="12" fontWeight="bold" fontFamily="Liberation Sans" fill="#111">8</text>
    <text transform="translate(12 152) rotate(-90)" fontSize="12" fontWeight="bold" fontFamily="Liberation Sans" fill="#111">7</text>
  </svg>
);

const DataFrame = () => (
  <div className="absolute top-[366px] left-[622px] flex h-[244px] w-[412px] items-center justify-center">
    <svg viewBox="0 0 412 244" className="absolute inset-0 size-full overflow-visible" fill="none" aria-hidden="true">
      <rect x="-3" y="-3" width="418" height="250" stroke="#a5a5a5" strokeDasharray="5 4" />
      <path d="M0 0H412M0 244H412M412 0V244" stroke="#00dede" />
      <path d="M0 0V244" stroke="#00dede" strokeWidth="2" />
      <path d="M0 0H412M0 244H412M412 0V244" stroke="#151515" strokeDasharray="5 4" />
      <path d="M0 0V244" stroke="#151515" strokeWidth="2" strokeDasharray="5 4" />
      {[0, 206, 412].flatMap((x) =>
        [0, 122, 244]
          .filter((y) => !(x === 206 && y === 122))
          .map((y) => <rect key={`${x}-${y}`} x={x - 4} y={y - 4} width="9" height="9" fill="#00c8c8" stroke="#111" strokeWidth="1.500" />),
      )}
    </svg>
    <span className="relative flex h-11 w-[210px] items-center justify-center border-2 border-[#1c1c1c] bg-[#f9fbee] text-[34px] leading-10 font-light text-[#222]">
      新建数据框
    </span>
  </div>
);

const arrows = [
  { from: [57, 204], to: [341, 41] },
  { from: [4, 767], to: [230, 603] },
  { from: [23, 1051], to: [204, 1029] },
  { from: [990, 252], to: [994, 212] },
];
const Annotations = () => (
  <svg className="pointer-events-none absolute inset-0 size-full" fill="none" aria-hidden="true">
    {arrows.map(({ from, to }, i) => {
      const a = Math.atan2(to[1] - from[1], to[0] - from[0]);
      const deg = (a * 180) / Math.PI;
      return (
        <g key={i}>
          <path d={`M${from[0]} ${from[1]}L${to[0] - 10 * Math.cos(a)} ${to[1] - 10 * Math.sin(a)}`} stroke="#fb0606" strokeWidth="4" strokeLinecap="round" />
          <path d="M0 0L-15-7-12 0-15 7z" fill="#fb0606" transform={`translate(${to[0]} ${to[1]}) rotate(${deg})`} />
        </g>
      );
    })}
  </svg>
);

export default function App() {
  return (
    <div className="relative flex h-screen flex-col overflow-hidden bg-linear-to-r from-[#efefef] to-[#fafafa] font-['Open_Sans','Noto_Sans_CJK_SC',sans-serif] text-black">
      <div className="shrink-0 border-t-[3px] border-white">
        <nav className="flex h-10 items-center pl-[5px] text-[18px]">
          {menus.map((m) => (
            <button key={m} type="button" className="h-10 px-3 whitespace-nowrap">
              {m}
            </button>
          ))}
        </nav>
        <Bar>
          <Grip />
          <Tool n="new" label="新建" />
          <Tool n="open" label="打开" />
          <Tool n="save" label="保存" />
          <Tool n="print" label="打印" />
          <Sep />
          <Tool n="cut" label="剪切" />
          <Tool n="copy" label="复制" />
          <Tool n="paste" label="粘贴" />
          <Tool n="cross" label="删除" />
          <Sep />
          <Tool n="undo" label="撤消" />
          <Tool n="redo" label="恢复" />
          <Sep />
          <Tool n="add" label="添加数据" />
          <Caret label="添加数据选项" />
          <Sep />
          <span className="relative flex h-7 w-[215px] shrink-0 border-2 border-[#c6c6c6] bg-white p-0.5">
            <select aria-label="地图比例" disabled className="w-[183px] appearance-none bg-[#efefef]" />
            <Chevron dim />
          </span>
          <Sep />
          <Tool n="editor" label="编辑器" />
          <Sep />
          <Tool n="toc" label="内容列表" />
          <Tool n="catalog" label="目录" />
          <Tool n="search" label="搜索" />
          <Tool n="toolbox" label="工具箱" />
          <Tool n="python" label="Python" />
          <Sep />
          <Tool n="model" label="模型构建器" />
          <Overflow />
        </Bar>
        <Bar>
          <Grip />
          <Tool n="pgZoomIn" label="放大页面" />
          <Tool n="pgZoomOut" label="缩小页面" />
          <Tool n="pgHand" label="平移页面" />
          <Tool n="pgFull" label="缩放整个页面" />
          <Tool n="pgOne" label="缩放至 100%" />
          <Sep />
          <Tool n="pgIn" label="固定比例放大" />
          <Tool n="pgOut" label="固定比例缩小" />
          <Sep />
          <Tool n="pgBack" label="返回" />
          <Tool n="pgFwd" label="前进" />
          <span className="relative flex h-[29px] w-[87px] shrink-0 border-2 border-[#8a8a8a] bg-white">
            <select aria-label="页面缩放" className="size-full appearance-none bg-transparent pl-[3px] font-['Liberation_Mono',monospace] text-[14px] font-bold">
              <option>75%</option>
            </select>
            <Chevron />
          </span>
          <Sep />
          <Tool n="draft" label="切换描绘模式" />
          <Tool n="focus" label="焦点数据框" />
          <Tool n="change" label="更改布局" />
          <Tool n="dataDriven" label="数据驱动页面" />
          <Overflow />
        </Bar>
        <div className="pl-[588px]">
          <Bar>
            <span className="-mr-[7px] flex"><Grip /></span>
            <Tool n="zoomIn" label="放大" />
            <Tool n="zoomOut" label="缩小" />
            <Tool n="hand" label="平移" />
            <Tool n="globe" label="全图" />
            <Sep />
            <Tool n="fixIn" label="固定放大" />
            <Tool n="fixOut" label="固定缩小" />
            <Sep />
            <Tool n="back" label="上一视图" />
            <Tool n="fwd" label="下一视图" />
            <Sep />
            <Tool n="selectDim" label="选择要素" />
            <Caret label="选择方式" light />
            <Tool n="clearDim" label="清除所选要素" />
            <Sep />
            <Tool n="cursor" label="选择元素" on />
            <Sep />
            <Tool n="info" label="识别" />
            <Tool n="bolt" label="超链接" />
            <Tool n="popup" label="HTML 弹出窗口" />
            <Sep />
            <Tool n="measure" label="测量" />
            <Sep />
            <Tool n="find" label="查找" />
            <Tool n="route" label="查找路径" />
            <Tool n="xy" label="转到 XY" />
            <Sep />
            <Tool n="time" label="时间滑块" />
            <Sep />
            <Tool n="viewer" label="创建查看器窗口" />
            <Overflow />
          </Bar>
        </div>
      </div>

      <main className="flex min-h-0 flex-1">
        <Contents />
        <div className="ml-[7px] flex min-w-0 flex-1 border-t-2 border-l-2 border-[#7c7c7c] bg-[#eeeeee] pt-[29px]">
          <div className="flex w-7 shrink-0 items-start overflow-hidden">
            <Ruler />
          </div>
          <div className="relative flex-1 border-t-2 border-l-2 border-[#7c7c7c] bg-white">
            <DataFrame />
          </div>
        </div>
      </main>

      <DrawingToolbar />
      <ContextMenu />
      <div role="tooltip" className="absolute top-[859px] left-[293px] h-[114px] w-[301px] border-2 border-[#767676] bg-linear-to-b from-white to-[#c5d8f0] pt-2 pl-[5px] text-[17px] leading-[25px] text-[#4c4c4c] shadow-[5px_5px_5px_rgba(0,0,0,0.4)]">
        <h3 className="font-bold">高级绘制选项</h3>
        <p className="mt-3 pr-5 pl-3">设置用于确定符号绘制方式的高级选项</p>
      </div>
      <Annotations />
    </div>
  );
}
